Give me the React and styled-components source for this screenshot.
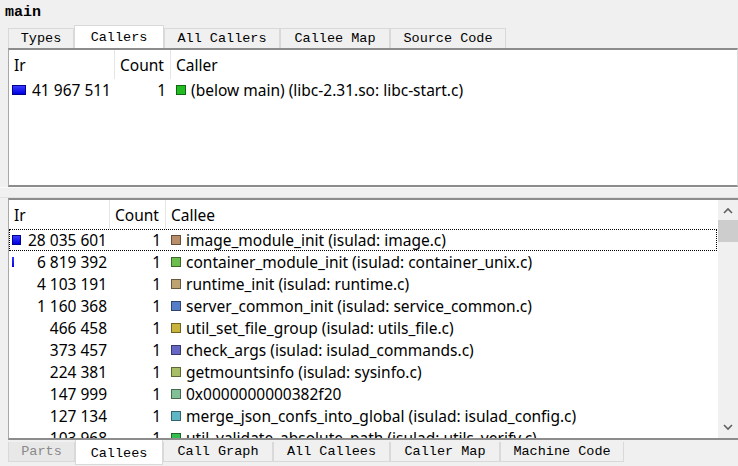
import React from 'react';
import styled, { createGlobalStyle } from 'styled-components';

const GlobalStyle = createGlobalStyle`
  html, body { margin: 0; padding: 0; background: #f0f0f0; }
  #root { width: 738px; height: 466px; overflow: hidden; }
`;

const TOTAL = 41967511;

const Window = styled.div`
  width: 738px;
  height: 466px;
  background: #f0f0f0;
  display: flex;
  flex-direction: column;
  overflow: hidden;
  font-family: "Noto Sans", "Liberation Sans", sans-serif;
`;

const Title = styled.div`
  height: 25px;
  padding-left: 5px;
  font-family: "Liberation Mono", "DejaVu Sans Mono", monospace;
  font-weight: bold;
  font-size: 15px;
  line-height: 25px;
  color: #000;
`;

const TabBar = styled.div`
  display: flex;
  align-items: flex-start;
  height: ${p => (p.$bottom ? 26 : 23)}px;
  padding-left: 8px;
  position: relative;
  z-index: 1;
  flex: none;
`;

const Tab = styled.div`
  box-sizing: border-box;
  width: ${p => p.$w}px;
  height: ${p => (p.$active ? (p.$bottom ? 25 : 23) : 20)}px;
  margin-top: ${p => (p.$active ? 0 : p.$bottom ? 2 : 3)}px;
  background: ${p => (p.$active ? '#fff' : p.$disabled ? '#e8e8e8' : '#f0f0f0')};
  border: 1px solid #d9d9d9;
  ${p => (p.$bottom ? 'border-top: none;' : 'border-bottom: none;')}
  ${p => p.$active && 'z-index: 2;'}
  padding-top: ${p => (p.$active && p.$bottom ? 2 : 0)}px;
  font-family: "Liberation Mono", "DejaVu Sans Mono", monospace;
  font-size: 13.5px;
  color: ${p => (p.$disabled ? '#8a8a8a' : '#000')};
  display: flex;
  align-items: center;
  justify-content: center;
  white-space: nowrap;
`;

const Panel = styled.div`
  box-sizing: border-box;
  margin-left: 8px;
  height: ${p => p.$h}px;
  flex: none;
  background: #fff;
  border-top: 2px solid #8c8c8c;
  border-bottom: 2px solid #8c8c8c;
  border-left: 1px solid #a8a8a8;
  border-right: ${p => (p.$edge ? '1px solid #dcdcdc' : 'none')};
  display: flex;
  overflow: hidden;
  position: relative;
`;

const Splitter = styled.div`
  height: 11px;
  flex: none;
  border-top: 1px solid #fafafa;
  border-bottom: 1px solid #e2e2e2;
  box-sizing: border-box;
`;

const TableArea = styled.div`
  flex: 1;
  min-width: 0;
  display: flex;
  flex-direction: column;
`;

const Row = styled.div`
  display: grid;
  grid-template-columns: ${p => p.$cols};
  height: ${p => p.$h}px;
  flex: none;
  position: relative;
  font-size: 15.5px;
  color: #000;
  ${p => p.$focus && `
    &::after {
      content: '';
      position: absolute;
      left: 0; right: 1px; top: 0; bottom: 0;
      border: 1px dotted #000;
      pointer-events: none;
    }
  `}
`;

const HeadCell = styled.div`
  display: flex;
  align-items: center;
  padding-left: 5px;
  border-right: ${p => (p.$last ? 'none' : '1px solid #e5e5e5')};
  white-space: nowrap;
  overflow: hidden;
`;

const Cell = styled.div`
  display: flex;
  align-items: center;
  justify-content: ${p => (p.$right ? 'flex-end' : 'flex-start')};
  padding-right: ${p => p.$pr || 0}px;
  padding-left: ${p => p.$pl || 0}px;
  white-space: nowrap;
  overflow: hidden;
  position: relative;
`;

const CostBar = styled.span`
  position: absolute;
  left: 3px;
  top: 50%;
  transform: translateY(-50%);
  box-sizing: border-box;
  height: 10px;
  background: linear-gradient(#3a3aff, #0000e0);
  border: 1px solid #000090;
  border-width: ${p => (p.$w < 4 ? '0' : '1px')};
`;

const Swatch = styled.span`
  box-sizing: border-box;
  width: 10px;
  height: 10px;
  flex: none;
  margin-right: 5px;
  background: ${p => p.$c};
  border: 1px solid rgba(0, 0, 0, 0.45);
`;

const Scrollbar = styled.div`
  width: 20px;
  flex: none;
  background: #f0f0f0;
  display: flex;
  flex-direction: column;
  align-items: stretch;
`;

const ScrollArrow = styled.div`
  height: ${p => p.$h}px;
  display: flex;
  align-items: center;
  justify-content: center;
  flex: none;
`;

const Thumb = styled.div`
  height: 22px;
  background: #cdcdcd;
  flex: none;
`;

const Track = styled.div`
  flex: 1;
`;

const fmt = n => String(n).replace(/\B(?=(\d{3})+(?!\d))/g, ' ');

const topTabs = [
  { label: 'Types', w: 66 },
  { label: 'Callers', w: 90, active: true },
  { label: 'All Callers', w: 116 },
  { label: 'Callee Map', w: 110 },
  { label: 'Source Code', w: 116 },
];

const bottomTabs = [
  { label: 'Parts', w: 67, disabled: true },
  { label: 'Callees', w: 88, active: true },
  { label: 'Call Graph', w: 110 },
  { label: 'All Callees', w: 117 },
  { label: 'Caller Map', w: 110 },
  { label: 'Machine Code', w: 124 },
];

const callers = [
  { ir: 41967511, count: 1, name: '(below main) (libc-2.31.so: libc-start.c)', c: '#22bb22' },
];

const callees = [
  { ir: 28035601, name: 'image_module_init (isulad: image.c)', c: '#b88f68' },
  { ir: 6819392, name: 'container_module_init (isulad: container_unix.c)', c: '#6cbd4e' },
  { ir: 4103191, name: 'runtime_init (isulad: runtime.c)', c: '#bda372' },
  { ir: 1160368, name: 'server_common_init (isulad: service_common.c)', c: '#567ec8' },
  { ir: 466458, name: 'util_set_file_group (isulad: utils_file.c)', c: '#c8b43c' },
  { ir: 373457, name: 'check_args (isulad: isulad_commands.c)', c: '#6666c4' },
  { ir: 224381, name: 'getmountsinfo (isulad: sysinfo.c)', c: '#a8be66' },
  { ir: 147999, name: '0x0000000000382f20', c: '#82bf96' },
  { ir: 127134, name: 'merge_json_confs_into_global (isulad: isulad_config.c)', c: '#5fb6c4' },
  { ir: 103968, name: 'util_validate_absolute_path (isulad: utils_verify.c)', c: '#34bd4c' },
];

function Tabs({ tabs, bottom }) {
  return (
    <TabBar $bottom={bottom}>
      {tabs.map(t => (
        <Tab key={t.label} $w={t.w} $active={t.active} $disabled={t.disabled} $bottom={bottom}>
          {t.label}
        </Tab>
      ))}
    </TabBar>
  );
}

function CostTable({ cols, third, rows, irPad, focusFirst }) {
  return (
    <TableArea>
      <Row $cols={cols} $h={29}>
        <HeadCell>Ir</HeadCell>
        <HeadCell>Count</HeadCell>
        <HeadCell $last>{third}</HeadCell>
      </Row>
      {rows.map((r, i) => {
        const w = Math.round((r.ir / TOTAL) * 14);
        return (
          <Row key={r.name} $cols={cols} $h={22} $focus={focusFirst && i === 0}>
            <Cell $right $pr={irPad}>
              {w >= 2 && <CostBar $w={w} style={{ width: `${w}px` }} />}
              {fmt(r.ir)}
            </Cell>
            <Cell $right $pr={5}>{r.count || 1}</Cell>
            <Cell $pl={5}>
              <Swatch $c={r.c} />
              {r.name}
            </Cell>
          </Row>
        );
      })}
    </TableArea>
  );
}

const Chevron = ({ up }) => (
  <svg width="10" height="7" viewBox="0 0 10 7">
    <path
      d={up ? 'M1 6 L5 2 L9 6' : 'M1 1 L5 5 L9 1'}
      fill="none"
      stroke="#606060"
      strokeWidth="1.6"
    />
  </svg>
);

export default function App() {
  return (
    <>
      <GlobalStyle />
      <Window>
        <Title>main</Title>
        <Tabs tabs={topTabs} />
        <Panel $h={139} $edge>
          <CostTable cols="106px 56px 1fr" third="Caller" rows={callers} irPad={4} />
        </Panel>
        <Splitter />
        <Panel $h={242}>
          <CostTable cols="101px 56px 1fr" third="Callee" rows={callees} irPad={3} focusFirst />
          <Scrollbar>
            <ScrollArrow $h={20}><Chevron up /></ScrollArrow>
            <Thumb />
            <Track />
            <ScrollArrow $h={22}><Chevron /></ScrollArrow>
          </Scrollbar>
        </Panel>
        <Tabs tabs={bottomTabs} bottom />
      </Window>
    </>
  );
}
